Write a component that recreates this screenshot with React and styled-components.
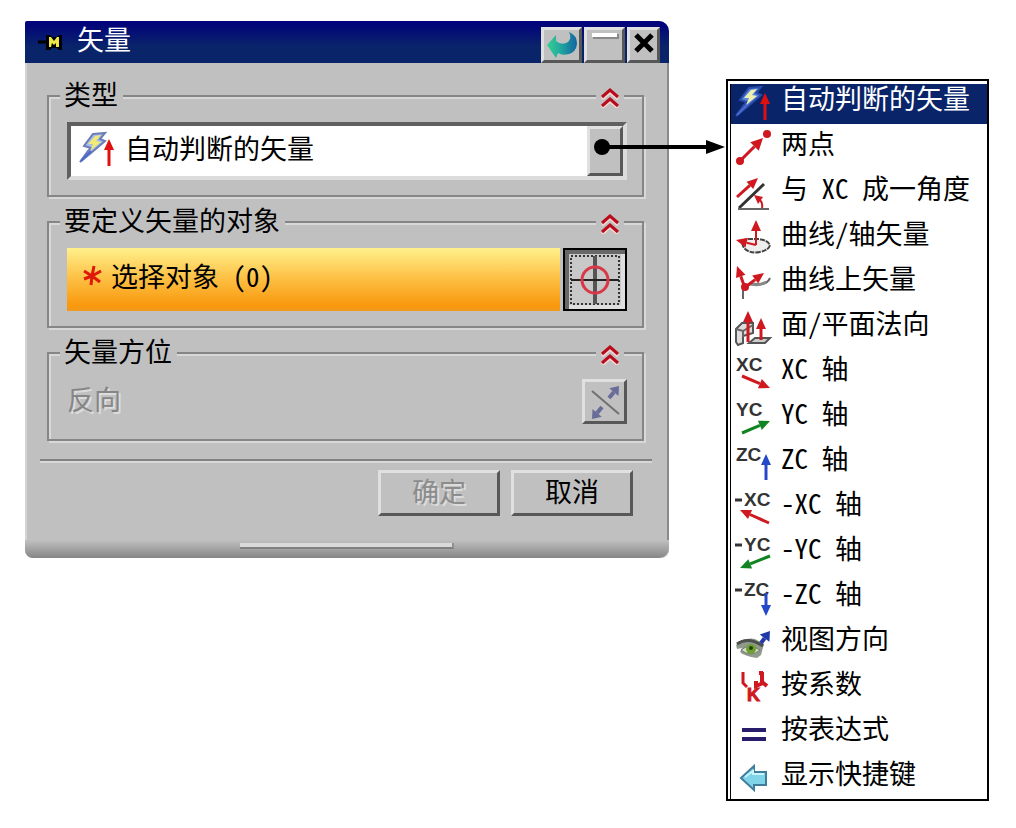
import React, { useState } from "react";
import styled, { createGlobalStyle, css } from "styled-components";

const GlobalStyle = createGlobalStyle`
  *, *::before, *::after { box-sizing: border-box; }
  body {
    margin: 0;
    background: #fff;
    color: #000;
    font: 27px/28px "Noto Sans CJK SC", sans-serif;
  }
  button, select { font: inherit; color: inherit; }
`;

const raised = css`
  background: #c0c0c0;
  border: 3px solid;
  border-color: #e0e0e0 #585858 #585858 #e0e0e0;
`;

const Page = styled.main`
  display: flex;
  align-items: flex-start;
  gap: 57px;
  padding: 21px 27px 21px 25px;
`;

const Dialog = styled.section`
  flex: 1;
  min-width: 520px;
  background: #c0c0c0;
  border-radius: 2px 10px 8px 8px;
`;

const TitleBar = styled.header`
  display: flex;
  align-items: flex-end;
  gap: 2px;
  height: 42px;
  padding: 0 9px 0 13px;
  background: linear-gradient(#00007c, #0a246a 60%);
  border-radius: 2px 10px 0 0;
`;

const Title = styled.h1`
  flex: 1;
  display: flex;
  align-items: center;
  gap: 13px;
  height: 42px;
  margin: 0;
  color: #fff;
  font-size: 27px;
  font-weight: 400;
`;

const TitleText = styled.span`
  padding-bottom: 6px;
`;

const TitleButton = styled.button`
  ${raised}
  display: flex;
  align-items: center;
  justify-content: center;
  width: ${(p) => (p.$narrow ? 33 : 41)}px;
  height: 36px;
  padding: 0;
`;

const Body = styled.div`
  padding: 19px 15px 0 13px;
  border: solid;
  border-width: 0 2px;
  border-color: transparent #8a8a8a transparent #d4d4d4;
`;

const Sections = styled.div`
  display: flex;
  flex-direction: column;
  gap: 11px;
  padding: 0 8px 0 7px;
`;

const Section = styled.fieldset`
  position: relative;
  min-width: 0;
  margin: 0;
  padding: 12px 15px 15px 18px;
  border: 2px solid #868686;
  box-shadow: 2px 2px 0 #d8d8d8, inset 2px 2px 0 #d8d8d8;
`;

const Legend = styled.legend`
  height: 28px;
  margin-left: -7px;
  padding: 0 5px 0 4px;
  line-height: 24px;
  background: #c0c0c0;
`;

const Collapse = styled.button`
  position: absolute;
  top: -28px;
  right: 18px;
  display: flex;
  align-items: center;
  justify-content: center;
  width: 28px;
  height: 28px;
  padding: 4px 0 0;
  border: 0;
  background: #c0c0c0;
`;

const Combo = styled.div`
  position: relative;
  display: flex;
  height: 58px;
  background: #fff;
  border: 4px solid;
  border-color: #606060 #dcdcdc #dcdcdc #606060;
`;

const ComboIcon = styled.span`
  position: absolute;
  left: 8px;
  top: 6px;
  display: flex;
  pointer-events: none;
`;

const Select = styled.select`
  flex: 1;
  min-width: 0;
  padding: 0 0 6px 54px;
  border: 0;
  background: #fff;
  appearance: none;
`;

const DropFace = styled.span`
  ${raised}
  width: 36px;
`;

const Connector = styled.svg`
  position: absolute;
  left: calc(100% - 29px);
  top: 12px;
  z-index: 1;
  pointer-events: none;
`;

const Row = styled.div`
  display: flex;
  align-items: stretch;
  justify-content: space-between;
  gap: 3px;
`;

const Prompt = styled.label`
  flex: 1;
  display: flex;
  align-items: center;
  gap: 8px;
  height: 63px;
  padding: 0 16px 7px;
  white-space: pre;
  background: linear-gradient(#fff08c, #fdc044 48%, #f9980c 92%, #f09a20);
`;

const PickButton = styled.button`
  display: flex;
  align-items: center;
  justify-content: center;
  width: 64px;
  padding: 0;
  background: #c8c8c8;
  border: 2px solid #000;
  box-shadow: inset 4px 4px 0 #686868, inset -4px -4px 0 #dedede;
`;

const ReverseLabel = styled.label`
  color: #868686;
  text-shadow: 2px 2px 0 #dcdcdc;
  padding-top: 6px;
`;

const ReverseButton = styled.button`
  ${raised}
  display: flex;
  align-items: center;
  justify-content: center;
  width: 45px;
  height: 45px;
  padding: 0;
`;

const Divider = styled.hr`
  height: 4px;
  margin: 18px 0 7px;
  border: 0;
  border-top: 2px solid #828282;
  border-bottom: 2px solid #d8d8d8;
`;

const Actions = styled.div`
  display: flex;
  justify-content: flex-end;
  gap: 11px;
  padding: 0 19px 24px;
`;

const ActionButton = styled.button`
  ${raised}
  width: 122px;
  height: 46px;
  padding: 0 0 4px;
  &:disabled {
    color: #8c8c8c;
    text-shadow: 2px 2px 0 #dcdcdc;
  }
`;

const Foot = styled.footer`
  display: flex;
  justify-content: center;
  height: 18px;
  padding-top: 3px;
  background: linear-gradient(#c0c0c0, #868686);
  border-radius: 0 0 10px 8px;
`;

const Grip = styled.span`
  width: 214px;
  height: 6px;
  background: #dadada;
  border-bottom: 2px solid #808080;
  border-right: 2px solid #909090;
`;

const Menu = styled.ul`
  flex: none;
  width: 263px;
  margin: 58px 0 0;
  padding: 3px 0 0 2px;
  list-style: none;
  border: 2px solid #000;
`;

const MenuRow = styled.li`
  border-left: 1px solid #000;
`;

const MenuItem = styled.button`
  display: flex;
  align-items: center;
  gap: 10px;
  width: 100%;
  height: ${(p) => (p.$selected ? 40 : 45)}px;
  padding: 0 0 0 4px;
  border: 0;
  background: ${(p) => (p.$selected ? "#0a246a" : "#fff")};
  color: ${(p) => (p.$selected ? "#fff" : "#000")};
  text-align: left;
  white-space: pre;
`;

const MenuText = styled.span`
  padding-bottom: ${(p) => (p.$selected ? 12 : 8)}px;
`;

const LatinText = styled.span`
  font-feature-settings: "hwid";
`;

function Label({ children }) {
  return children
    .split(/([ -~]+)/)
    .filter(Boolean)
    .map((part, i) => (/^[ -~]/.test(part) ? <LatinText key={i}>{part}</LatinText> : part));
}

const RED = "#cf1820";
const GREEN = "#108420";
const BLUE = "#2448c8";

/* Straight arrow from (x1, y1) to its tip at (x2, y2). */
function Arrow({ x1, y1, x2, y2, color = RED, head = 11, wide = 5, stroke = 3 }) {
  const len = Math.hypot(x2 - x1, y2 - y1);
  const ux = (x2 - x1) / len;
  const uy = (y2 - y1) / len;
  const bx = x2 - ux * head;
  const by = y2 - uy * head;
  return (
    <g fill={color} stroke={color}>
      <line x1={x1} y1={y1} x2={bx} y2={by} strokeWidth={stroke} />
      <polygon
        stroke="none"
        points={`${x2},${y2} ${bx - uy * wide},${by + ux * wide} ${bx + uy * wide},${by - ux * wide}`}
      />
    </g>
  );
}

function Icon({ children }) {
  return (
    <svg width="36" height="36" viewBox="0 0 36 36" fill="none" overflow="visible" aria-hidden="true">
      {children}
    </svg>
  );
}

function AxisName({ negative, children }) {
  return (
    <>
      {negative && <path d="M0 11H7" stroke="#333" strokeWidth="3" />}
      <text
        x={negative ? 9 : 1}
        y="17"
        fill="#333"
        fontFamily="Liberation Sans, sans-serif"
        fontWeight="700"
        fontSize="19"
      >
        {children}
      </text>
    </>
  );
}

const Bolt = ({ dark }) => (
  <Icon>
    <path
      d="M14 2L26 1L21 7L26 9L12 21L1 30L9 19L12 16L5 14Z"
      fill={dark ? "#5a86dc" : "#a8bce8"}
      stroke={dark ? "#2a4ca8" : "#6c7cb8"}
      strokeWidth="2"
    />
    <path d="M16 4L22 3L17 9L22 10L11 19L14 12L9 12Z" fill={dark ? "#eef0b0" : "#f0eb78"} />
    <path d="M12 19L2 29" stroke="#4868d0" strokeWidth="2" />
    <Arrow x1={30} y1={34} x2={30} y2={7} color="#e01010" />
  </Icon>
);

const icons = {
  auto: <Bolt dark />,
  twoPoints: (
    <Icon>
      <Arrow x1={5} y1={32} x2={28} y2={9} wide={6} head={12} />
      <circle cx="5" cy="32" r="4" fill={RED} />
      <circle cx="32" cy="5" r="4" fill={RED} />
    </Icon>
  ),
  angle: (
    <Icon>
      <path d="M29 10L4 34" stroke="#333" strokeWidth="3" />
      <path d="M3 35H34" stroke="#666" strokeWidth="2" />
      <Arrow x1={2} y1={23} x2={23} y2={4} />
      <path d="M27 34Q28 29 25 26" stroke={RED} strokeWidth="2" />
      <path d="M19 21L28 23L23 30Z" fill={RED} />
    </Icon>
  ),
  axisVector: (
    <Icon>
      <path
        d="M12 20Q5 23 9 29Q15 35 25 33Q34 31 35 26Q32 21 24 20Z"
        fill="#eee"
        stroke="#444"
        strokeWidth="2"
        strokeDasharray="5 1"
      />
      <Arrow x1={21} y1={26} x2={1} y2={21} stroke={2} />
      <Arrow x1={21} y1={26} x2={21} y2={1} stroke={2} />
    </Icon>
  ),
  onCurve: (
    <Icon>
      <path d="M8 35V26Q11 19 22 20Q32 21 35 14" stroke="#666" strokeWidth="2" />
      <path d="M16 20Q25 22 31 18" stroke="#888" strokeWidth="3" />
      <Arrow x1={10} y1={24} x2={2} y2={2} />
      <Arrow x1={9} y1={24} x2={29} y2={9} />
      <circle cx="10" cy="23" r="4" fill={RED} />
    </Icon>
  ),
  faceNormal: (
    <Icon>
      <path d="M1 20L7 14H18V24L8 27V34L3 36L1 33Z" fill="#ddd" stroke="#555" strokeWidth="2" />
      <path d="M1 20L8 22L18 16M8 22V28" stroke="#666" strokeWidth="2" />
      <path d="M14 34L20 29H35L30 34Z" fill="#ccc" stroke="#555" strokeWidth="2" />
      <Arrow x1={13} y1={33} x2={13} y2={2} />
      <Arrow x1={26} y1={31} x2={26} y2={9} />
    </Icon>
  ),
  xc: (
    <Icon>
      <AxisName>XC</AxisName>
      <Arrow x1={7} y1={22} x2={35} y2={34} />
    </Icon>
  ),
  yc: (
    <Icon>
      <AxisName>YC</AxisName>
      <Arrow x1={7} y1={34} x2={35} y2={22} color={GREEN} />
    </Icon>
  ),
  zc: (
    <Icon>
      <AxisName>ZC</AxisName>
      <Arrow x1={31} y1={36} x2={31} y2={10} color={BLUE} />
    </Icon>
  ),
  nxc: (
    <Icon>
      <AxisName negative>XC</AxisName>
      <Arrow x1={34} y1={34} x2={5} y2={21} />
    </Icon>
  ),
  nyc: (
    <Icon>
      <AxisName negative>YC</AxisName>
      <Arrow x1={35} y1={22} x2={5} y2={34} color={GREEN} />
    </Icon>
  ),
  nzc: (
    <Icon>
      <AxisName negative>ZC</AxisName>
      <Arrow x1={31} y1={14} x2={31} y2={37} color={BLUE} />
    </Icon>
  ),
  view: (
    <Icon>
      <path d="M1 21Q10 13 20 15L29 20L26 31L22 34Q9 32 5 28L7 24L2 25Z" fill="#909a8c" />
      <path d="M2 20Q13 12 28 22" stroke="#4c504c" strokeWidth="3" />
      <path d="M6 26Q14 19 25 26Q16 34 6 26Z" fill="#d4e0c4" stroke="#777" />
      <circle cx="16" cy="25" r="5" fill="#6ea030" />
      <circle cx="16" cy="24" r="2" fill="#244010" />
      <Arrow x1={26} y1={19} x2={35} y2={7} color="#2038a8" head={9} wide={6} stroke={4} />
    </Icon>
  ),
  factor: (
    <Icon>
      <path d="M8 3V14L12 18" stroke={RED} strokeWidth="3" />
      <path d="M27 3V13L32 17M24 4H28M28 14L21 17V12" stroke={RED} strokeWidth="4" />
      <text
        x="12"
        y="32"
        fill={RED}
        stroke={RED}
        fontFamily="Liberation Sans, sans-serif"
        fontWeight="700"
        fontSize="18"
      >
        K
      </text>
    </Icon>
  ),
  expression: (
    <Icon>
      <path d="M7 16H31M7 25H31" stroke="#281c6c" strokeWidth="4" />
    </Icon>
  ),
  shortcut: (
    <Icon>
      <path d="M6 19L19 7V13H31V26H19V31Z" fill="#80d4e8" stroke="#407c9c" strokeWidth="2" />
      <path d="M10 18L18 12V15H29" stroke="#c8f4fa" strokeWidth="2" />
    </Icon>
  ),
};

const vectorTypes = [
  ["auto", "自动判断的矢量"],
  ["twoPoints", "两点"],
  ["angle", "与 XC 成一角度"],
  ["axisVector", "曲线/轴矢量"],
  ["onCurve", "曲线上矢量"],
  ["faceNormal", "面/平面法向"],
  ["xc", "XC 轴"],
  ["yc", "YC 轴"],
  ["zc", "ZC 轴"],
  ["nxc", "-XC 轴"],
  ["nyc", "-YC 轴"],
  ["nzc", "-ZC 轴"],
  ["view", "视图方向"],
  ["factor", "按系数"],
  ["expression", "按表达式"],
  ["shortcut", "显示快捷键"],
];

const PinIcon = () => (
  <svg width="26" height="18" viewBox="0 0 26 18" aria-hidden="true">
    <path d="M0 9H9" stroke="#000" strokeWidth="3" />
    <path d="M8 2H12L14 4H19L21 2H24V17H21L19 15H14L12 17H8Z" fill="#000" />
    <path d="M11 4H13L16 8L19 4H21V14H18V10L16 12L14 10L13 14H11Z" fill="#f0e848" />
  </svg>
);

const ResetIcon = () => (
  <svg width="32" height="28" viewBox="0 0 32 28" aria-hidden="true">
    <defs>
      <linearGradient id="swirl">
        <stop offset="0" stopColor="#38d090" />
        <stop offset="0.45" stopColor="#20a8a0" />
        <stop offset="1" stopColor="#1464a0" />
      </linearGradient>
    </defs>
    <path
      d="M1 14L10 4V10Q16 15 22 11Q26 7 23 1Q31 4 31 13Q30 21 23 23Q16 25 12 22L10 27Z"
      fill="url(#swirl)"
    />
  </svg>
);

const Chevrons = () => (
  <svg width="18" height="20" viewBox="0 0 18 20" fill="none" aria-hidden="true">
    <path d="M1 11L9 4L17 11M1 20L9 13L17 20" stroke="#f6d8d4" strokeWidth="3" />
    <path d="M1 9L9 2L17 9M1 18L9 11L17 18" stroke="#b80c1c" strokeWidth="3" />
  </svg>
);

function Group({ title, children }) {
  return (
    <Section>
      <Legend>{title}</Legend>
      <Collapse type="button" aria-label={title}>
        <Chevrons />
      </Collapse>
      {children}
    </Section>
  );
}

export default function App() {
  const [type, setType] = useState("auto");
  return (
    <>
      <GlobalStyle />
      <Page>
        <Dialog aria-labelledby="dialog-title">
          <TitleBar>
            <Title id="dialog-title">
              <PinIcon />
              <TitleText>矢量</TitleText>
            </Title>
            <TitleButton type="button" aria-label="重置">
              <ResetIcon />
            </TitleButton>
            <TitleButton type="button" aria-label="最小化">
              <svg width="28" height="28" viewBox="0 0 28 28" aria-hidden="true">
                <path d="M2 3H28V8H2Z" fill="#8a8a8a" />
                <path d="M1 2H26V6H1Z" fill="#fff" />
              </svg>
            </TitleButton>
            <TitleButton type="button" $narrow aria-label="关闭">
              <svg width="20" height="24" viewBox="0 0 20 24" aria-hidden="true">
                <path d="M2 2L18 18M18 2L2 18" stroke="#000" strokeWidth="5" />
              </svg>
            </TitleButton>
          </TitleBar>
          <Body>
            <Sections>
              <Group title="类型">
                <Combo>
                  <ComboIcon>
                    <Bolt />
                  </ComboIcon>
                  <Select aria-label="类型" value={type} onChange={(e) => setType(e.target.value)}>
                    {vectorTypes.map(([id, name]) => (
                      <option key={id} value={id}>
                        {name}
                      </option>
                    ))}
                  </Select>
                  <DropFace aria-hidden="true" />
                  <Connector width="132" height="18" viewBox="0 0 132 18" aria-hidden="true">
                    <circle cx="8" cy="9" r="8" />
                    <path d="M8 7H112V2L131 9L112 16V11H8Z" />
                  </Connector>
                </Combo>
              </Group>
              <Group title="要定义矢量的对象">
                <Row>
                  <Prompt htmlFor="pick">
                    <svg width="20" height="22" viewBox="0 0 20 22" aria-hidden="true">
                      <path
                        d="M11 1L9 11L8 20M9 11L1 6M9 11L18 6M9 11L1 14M9 11L17 17"
                        fill="none"
                        stroke="#e01808"
                        strokeWidth="3"
                      />
                    </svg>
                    <span>
                      <Label>选择对象 (0)</Label>
                    </span>
                  </Prompt>
                  <PickButton id="pick" type="button">
                    <svg width="52" height="52" viewBox="0 0 52 52" fill="none" aria-hidden="true">
                      <rect x="2" y="2" width="48" height="48" stroke="#333" strokeWidth="2" strokeDasharray="2 2" />
                      <path d="M26 2V50" stroke="#555" strokeWidth="4" />
                      <path d="M2 26H50" stroke="#222" strokeWidth="2" />
                      <circle cx="26" cy="26" r="13" stroke="#d83848" strokeWidth="3" />
                    </svg>
                  </PickButton>
                </Row>
              </Group>
              <Group title="矢量方位">
                <Row>
                  <ReverseLabel htmlFor="reverse">反向</ReverseLabel>
                  <ReverseButton id="reverse" type="button" disabled>
                    <svg width="36" height="36" viewBox="0 0 36 36" aria-hidden="true">
                      <path d="M5 7L32 30" stroke="#707070" strokeWidth="2" />
                      <Arrow x1={22} y1={14} x2={32} y2={2} color="#686c98" stroke={4} wide={6} head={8} />
                      <Arrow x1={15} y1={23} x2={5} y2={35} color="#686c98" stroke={4} wide={6} head={8} />
                    </svg>
                  </ReverseButton>
                </Row>
              </Group>
            </Sections>
            <Divider />
            <Actions>
              <ActionButton type="button" disabled>
                确定
              </ActionButton>
              <ActionButton type="button">取消</ActionButton>
            </Actions>
          </Body>
          <Foot>
            <Grip />
          </Foot>
        </Dialog>
        <Menu aria-label="类型">
          {vectorTypes.map(([id, name]) => (
            <MenuRow key={id}>
              <MenuItem type="button" $selected={id === type} onClick={() => setType(id)}>
                {icons[id]}
                <MenuText $selected={id === type}>
                  <Label>{name}</Label>
                </MenuText>
              </MenuItem>
            </MenuRow>
          ))}
        </Menu>
      </Page>
    </>
  );
}
